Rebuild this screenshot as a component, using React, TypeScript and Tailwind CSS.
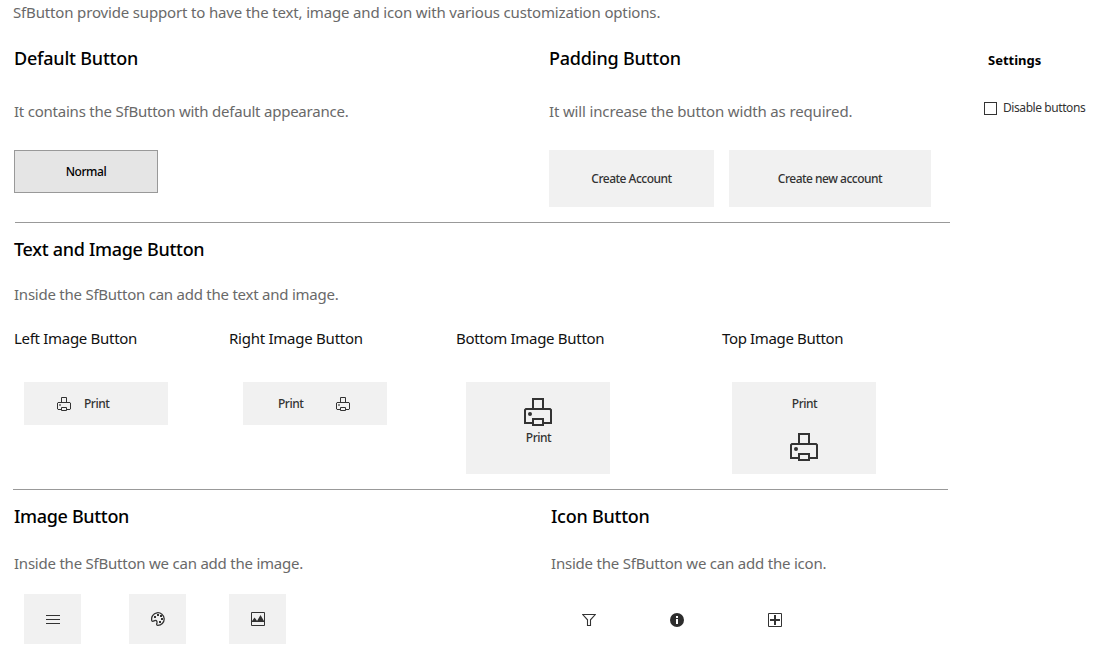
import type { ReactNode } from "react";

function Heading({ className = "", children }: { className?: string; children: ReactNode }) {
  return (
    <h2 className={`h-[26px] whitespace-nowrap text-[18px] font-medium leading-[24px] text-black ${className}`}>
      {children}
    </h2>
  );
}

function Note({ className = "", children }: { className?: string; children: ReactNode }) {
  return (
    <p className={`h-[26px] whitespace-nowrap text-[15px] leading-[24px] text-[#696969] ${className}`}>{children}</p>
  );
}

function Label({ className = "", children }: { className?: string; children: ReactNode }) {
  return (
    <h3 className={`h-[26px] whitespace-nowrap text-[15px] font-normal leading-[24px] text-[#111] ${className}`}>
      {children}
    </h3>
  );
}

function SmallPrinter() {
  return (
    <svg className="block size-3.5 shrink-0" viewBox="0 0 14 14" fill="none" stroke="#333" strokeWidth="1">
      <path d="M4.5 5.5v-5h5v5" />
      <path d="M4 12.5H1L.5 12V6l.5-.5h12l.5.5v6l-.5.5h-3" />
      <path d="M4.5 10.5h5v3h-5z" />
      <path d="M2 7h2v2H2z" fill="#888" stroke="none" />
    </svg>
  );
}

function LargePrinter() {
  return (
    <svg className="block size-7 shrink-0" viewBox="0 0 28 28" fill="none" stroke="#333" strokeWidth="2">
      <path d="M9 11V1h10v10" />
      <path d="M8 25H1V12l1-1h24l1 1v13h-7" />
      <path d="M9 21h10v6H9z" />
      <circle cx="6" cy="16" r="2" fill="#333" stroke="none" />
    </svg>
  );
}

function MenuIcon() {
  return (
    <svg className="block size-3.5" viewBox="0 0 14 14" stroke="#333" strokeWidth="1">
      <path d="M0 2.5h14M0 6.5h14M0 10.5h14" />
    </svg>
  );
}

function PaletteIcon() {
  return (
    <svg className="block size-3.5" viewBox="0 0 14 14" fill="none" stroke="#333" strokeWidth="1.3">
      <path d="M.8 8.6A6.300 6.300 0 1 1 6.500 13.300C5.400 13.300 5.600 12 5.900 11 6.200 9.600 5.800 8.400 4.600 8.400 3.200 8.400 2.800 9.300 1.900 9.300 1.200 9.300.9 9 .8 8.600Z" />
      <path d="M3 4h2v2H3zM6 2h2v2H6zM9 3h2v2H9zM10 6h2v2h-2zM8 9h2v2H8z" fill="#333" stroke="none" />
    </svg>
  );
}

function PictureIcon() {
  return (
    <svg className="block size-3.5" viewBox="0 0 14 14" fill="none" stroke="#333">
      <path d="M.5.5h13v13H.5z" />
      <path d="M1 10V9l2.500-3.500L5.500 8 6 9l3.500-6L13 9v1z" fill="#333" stroke="none" />
    </svg>
  );
}

function FilterIcon() {
  return (
    <svg className="block size-3.5" viewBox="0 0 14 14" fill="none" stroke="#333" strokeWidth="1.100">
      <path d="M.7 1.500h12.600L8.500 6.800v5.700h-3V6.800z" />
    </svg>
  );
}

function InfoIcon() {
  return (
    <svg className="block size-3.5" viewBox="0 0 14 14">
      <circle cx="7" cy="7" r="7" fill="#2d2d2d" />
      <path d="M6 3h2v2H6zM6 6h2v5H6z" fill="#fff" />
    </svg>
  );
}

function PlusBoxIcon() {
  return (
    <svg className="block size-3.5" viewBox="0 0 14 14" fill="none" stroke="#333">
      <path d="M.5.5h13v13H.5z" />
      <path d="M7 2v10M2 7h10" strokeWidth="2" />
    </svg>
  );
}

const face = "flex shrink-0 bg-[#f1f1f1] text-[12px] font-medium tracking-[-0.5px] text-[#333]";

export default function App() {
  return (
    <div className="flex h-[657px] w-[1104px] overflow-hidden bg-white font-['Noto_Sans','Open_Sans',sans-serif]">
      <main className="w-[950px] shrink-0">
        <Note className="pl-[13px] tracking-[-0.157px]">
          SfButton provide support to have the text, image and icon with various customization options.
        </Note>

        <section className="mt-5 flex h-[176px]">
          <div className="w-[535px] pl-3.5">
            <Heading className="tracking-[-0.21px]">Default Button</Heading>
            <Note className="mt-[27px] tracking-[-0.225px]">It contains the SfButton with default appearance.</Note>
            <button className="mt-[25px] flex h-[43px] w-36 items-center justify-center border border-[#999] bg-[#e5e5e5] text-[12px] font-medium tracking-[-0.45px] text-black">
              Normal
            </button>
          </div>
          <div className="pl-3.5">
            <Heading className="tracking-[-0.21px]">Padding Button</Heading>
            <Note className="mt-[27px] tracking-[-0.15px]">It will increase the button width as required.</Note>
            <div className="mt-[25px] flex gap-[15px]">
              <button className={`${face} h-[57px] w-[165px] items-center justify-center`}>Create Account</button>
              <button className={`${face} h-[57px] w-[202px] items-center justify-center`}>Create new account</button>
            </div>
          </div>
        </section>

        <hr className="ml-[15px] w-[935px] border-t border-[#999]" />

        <section className="h-[266px] pl-3.5 pt-3.5">
          <Heading className="tracking-[-0.3px]">Text and Image Button</Heading>
          <Note className="mt-[19px] tracking-[-0.24px]">Inside the SfButton can add the text and image.</Note>
          <div className="mt-[18px] flex">
            <div className="w-[215px]">
              <Label className="tracking-[-0.3px]">Left Image Button</Label>
              <button className={`${face} ml-2.5 mt-[30px] h-[43px] w-36 items-center gap-[13px] pl-[33px]`}>
                <SmallPrinter />
                Print
              </button>
            </div>
            <div className="w-[227px]">
              <Label className="tracking-[-0.25px]">Right Image Button</Label>
              <button className={`${face} ml-3.5 mt-[30px] h-[43px] w-36 items-center justify-between pl-[35px] pr-[37px]`}>
                Print
                <SmallPrinter />
              </button>
            </div>
            <div className="w-[266px]">
              <Label className="tracking-[-0.3px]">Bottom Image Button</Label>
              <button className={`${face} ml-2.5 mt-[30px] h-[92px] w-36 flex-col items-center gap-[3px] pt-4 leading-[18px]`}>
                <LargePrinter />
                <span className="pl-px">Print</span>
              </button>
            </div>
            <div>
              <Label className="tracking-[-0.35px]">Top Image Button</Label>
              <button className={`${face} ml-2.5 mt-[30px] h-[92px] w-36 flex-col items-center gap-5 pt-[13px] leading-[18px]`}>
                <span className="pl-px">Print</span>
                <LargePrinter />
              </button>
            </div>
          </div>
        </section>

        <hr className="ml-[13px] w-[935px] border-t border-[#999]" />

        <section className="flex pt-3.5">
          <div className="w-[537px] pl-3.5">
            <Heading className="tracking-[-0.33px]">Image Button</Heading>
            <Note className="mt-[21px] tracking-[-0.225px]">Inside the SfButton we can add the image.</Note>
            <div className="ml-2.5 mt-[17px] flex">
              <button className={`${face} h-[50px] w-[57px] justify-center pt-[19px]`}>
                <MenuIcon />
              </button>
              <button className={`${face} ml-12 h-[50px] w-[57px] justify-center pt-[18px]`}>
                <PaletteIcon />
              </button>
              <button className={`${face} ml-[43px] h-[50px] w-[57px] justify-center pt-[18px]`}>
                <PictureIcon />
              </button>
            </div>
          </div>
          <div className="pl-3.5">
            <Heading className="tracking-[-0.25px]">Icon Button</Heading>
            <Note className="mt-[21px] tracking-[-0.21px]">Inside the SfButton we can add the icon.</Note>
            <div className="ml-[31px] mt-9 flex">
              <button>
                <FilterIcon />
              </button>
              <button className="ml-[74px]">
                <InfoIcon />
              </button>
              <button className="ml-[84px]">
                <PlusBoxIcon />
              </button>
            </div>
          </div>
        </section>
      </main>

      <aside className="pl-[34px] pt-[50px]">
        <h2 className="h-5 pl-1 text-[13px] font-bold leading-5 text-black">Settings</h2>
        <label className="mt-7 flex h-5 items-center gap-1.5 whitespace-nowrap text-[12px] tracking-[-0.42px] text-[#333]">
          <input type="checkbox" className="size-[13px] appearance-none border border-[#333] bg-white" />
          Disable buttons
        </label>
      </aside>
    </div>
  );
}
